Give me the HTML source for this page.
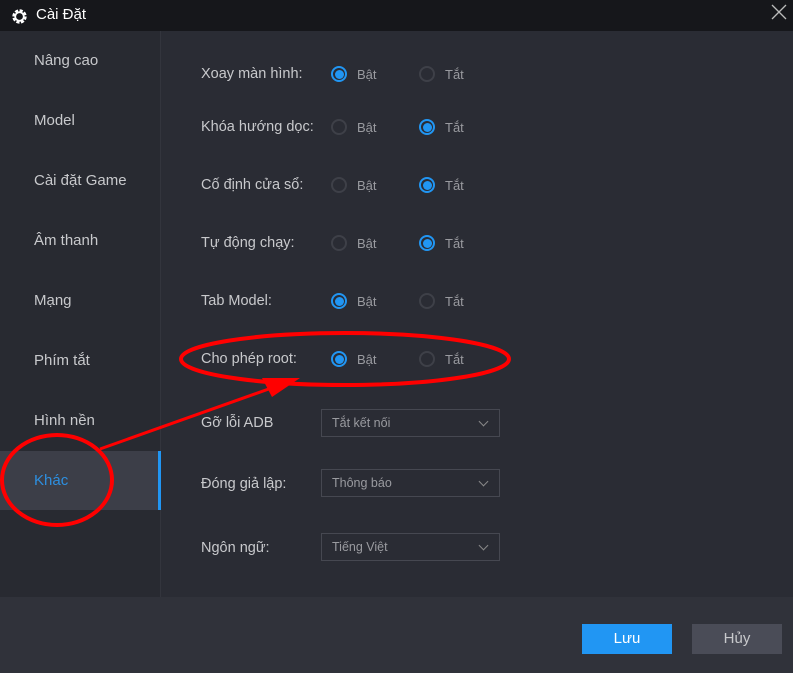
<!DOCTYPE html><html><head><meta charset="utf-8"><style>
body{margin:0;width:793px;height:673px;background:#2a2c34;font-family:"Liberation Sans","DejaVu Sans",sans-serif;position:relative;overflow:hidden;color:#c8c9cc}
.a{position:absolute}
.title{left:0;top:0;width:793px;height:31px;background:#16171b}
.side{left:0;top:31px;width:160px;height:566px;background:#282a31;border-right:1px solid #33353d}
.item{position:absolute;left:34px;font-size:15px;color:#c8c9cc}
.lbl{font-size:14.5px;color:#c8c9cc}
.r{width:16px;height:16px;border:2px solid #3e4048;border-radius:50%;box-sizing:border-box}
.r.on{border:2px solid #2196f3}
.r.on::after{content:"";position:absolute;left:1.5px;top:1.5px;width:9px;height:9px;border-radius:50%;background:#2196f3}
.t{font-size:13px;color:#9a9ba0}
.dd{width:179px;height:28px;border:1px solid #464851;box-sizing:border-box;font-size:12.5px;color:#9a9ba0;padding:6px 0 0 10px}
.dd::after{content:"";position:absolute;right:12px;top:8px;width:6px;height:6px;border-right:1px solid #888;border-bottom:1px solid #888;transform:rotate(45deg)}
.foot{left:0;top:597px;width:793px;height:76px;background:#30323a}
</style></head><body>
<div class="a title"></div>
<svg class="a" style="left:11px;top:8px" width="17" height="17" viewBox="0 0 17 17"><circle cx="8.5" cy="8.5" r="6" fill="none" stroke="#fff" stroke-width="2.4" stroke-dasharray="3.2 1.5"/><circle cx="8.5" cy="8.5" r="4.3" fill="none" stroke="#fff" stroke-width="1.8"/></svg>
<div class="a" style="left:36px;top:6px;font-size:15px;color:#fff">Cài Đặt</div>
<svg class="a" style="left:771px;top:4px" width="16" height="16"><path d="M1 1L15 15M15 1L1 15" stroke="#bbb" stroke-width="1.3"/></svg>
<div class="a side"></div>
<div class="a" style="left:0;top:451px;width:158px;height:59px;background:#3c3e48"></div>
<div class="a" style="left:158px;top:451px;width:3px;height:59px;background:#2196f3"></div>
<div class="item" style="top:52px">Nâng cao</div>
<div class="item" style="top:112px">Model</div>
<div class="item" style="top:172px">Cài đặt Game</div>
<div class="item" style="top:232px">Âm thanh</div>
<div class="item" style="top:292px">Mạng</div>
<div class="item" style="top:352px">Phím tắt</div>
<div class="item" style="top:412px">Hình nền</div>
<div class="item" style="top:472px;color:#2d8fe0">Khác</div>

<div class="a lbl" style="left:201px;top:66px">Xoay màn hình:</div>
<div class="a r on" style="left:331px;top:66px"></div><div class="a t" style="left:357px;top:67px">Bật</div>
<div class="a r" style="left:419px;top:66px"></div><div class="a t" style="left:445px;top:67px">Tắt</div>

<div class="a lbl" style="left:201px;top:119px">Khóa hướng dọc:</div>
<div class="a r" style="left:331px;top:119px"></div><div class="a t" style="left:357px;top:120px">Bật</div>
<div class="a r on" style="left:419px;top:119px"></div><div class="a t" style="left:445px;top:120px">Tắt</div>

<div class="a lbl" style="left:201px;top:177px">Cố định cửa sổ:</div>
<div class="a r" style="left:331px;top:177px"></div><div class="a t" style="left:357px;top:178px">Bật</div>
<div class="a r on" style="left:419px;top:177px"></div><div class="a t" style="left:445px;top:178px">Tắt</div>

<div class="a lbl" style="left:201px;top:235px">Tự động chạy:</div>
<div class="a r" style="left:331px;top:235px"></div><div class="a t" style="left:357px;top:236px">Bật</div>
<div class="a r on" style="left:419px;top:235px"></div><div class="a t" style="left:445px;top:236px">Tắt</div>

<div class="a lbl" style="left:201px;top:293px">Tab Model:</div>
<div class="a r on" style="left:331px;top:293px"></div><div class="a t" style="left:357px;top:294px">Bật</div>
<div class="a r" style="left:419px;top:293px"></div><div class="a t" style="left:445px;top:294px">Tắt</div>

<div class="a lbl" style="left:201px;top:351px">Cho phép root:</div>
<div class="a r on" style="left:331px;top:351px"></div><div class="a t" style="left:357px;top:352px">Bật</div>
<div class="a r" style="left:419px;top:351px"></div><div class="a t" style="left:445px;top:352px">Tắt</div>

<div class="a lbl" style="left:201px;top:415px">Gỡ lỗi ADB</div>
<div class="a dd" style="left:321px;top:409px">Tắt kết nối</div>
<div class="a lbl" style="left:201px;top:476px">Đóng giả lập:</div>
<div class="a dd" style="left:321px;top:469px">Thông báo</div>
<div class="a lbl" style="left:201px;top:540px">Ngôn ngữ:</div>
<div class="a dd" style="left:321px;top:533px">Tiếng Việt</div>

<div class="a foot"></div>
<div class="a" style="left:582px;top:624px;width:90px;height:30px;background:#2196f3;color:#fff;font-size:15px;text-align:center;line-height:30px">Lưu</div>
<div class="a" style="left:692px;top:624px;width:90px;height:30px;background:#4a4c57;color:#c8c9cc;font-size:15px;text-align:center;line-height:30px">Hủy</div>

<svg class="a" style="left:0;top:0" width="793" height="673">
<ellipse cx="345" cy="359" rx="164" ry="26" fill="none" stroke="#f00" stroke-width="4"/>
<ellipse cx="57" cy="480" rx="55" ry="45" fill="none" stroke="#f00" stroke-width="4"/>
<line x1="100" y1="449" x2="280" y2="385" stroke="#f00" stroke-width="3"/>
<polygon points="300,378 262,378 272,397" fill="#f00"/>
</svg>
</body></html>
